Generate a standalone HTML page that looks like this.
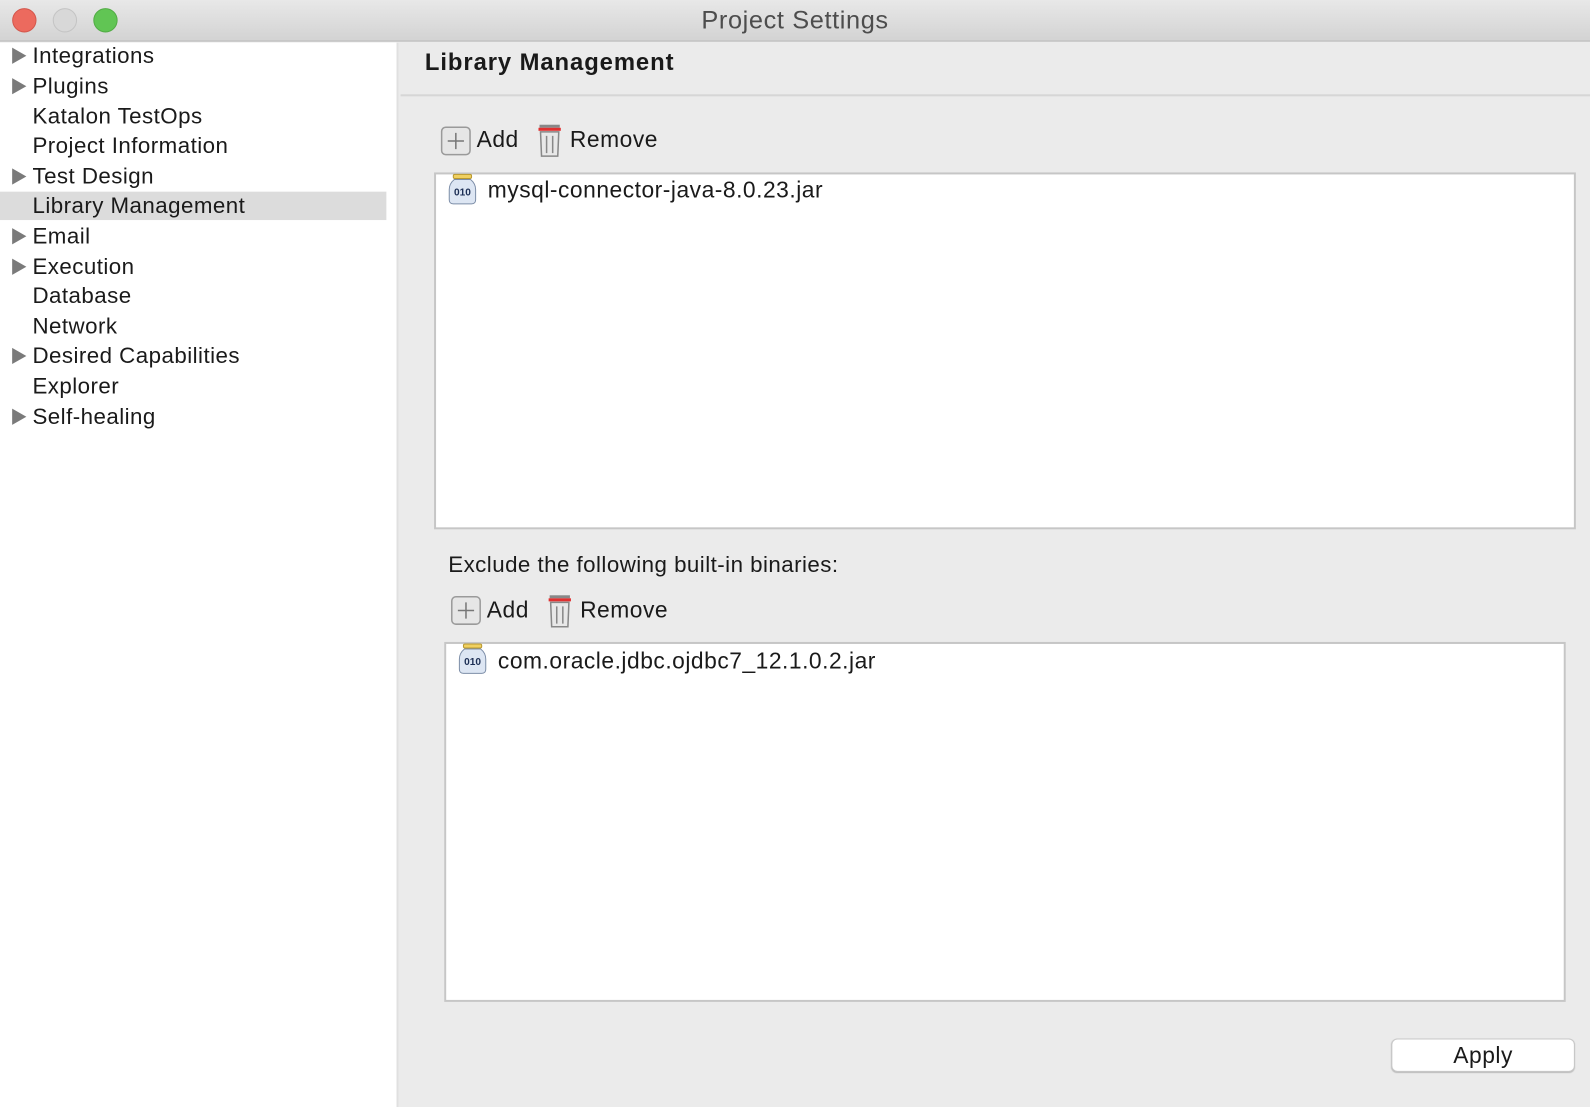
<!DOCTYPE html>
<html><head><meta charset="utf-8"><style>
*{margin:0;padding:0;box-sizing:border-box}
body{width:1590px;height:1092px;overflow:hidden;background:#ebebeb;font-family:"Liberation Sans",sans-serif;color:#1a1a1a;position:relative}
#w{position:absolute;left:0;top:0;width:1568px;height:1077px;transform:scale(1.0141);transform-origin:0 0}
.title{position:absolute;left:0;top:0;width:1568px;height:41px;background:linear-gradient(#e8e8e8,#d3d3d3);border-bottom:1px solid #b5b5b5}
.title .t{position:absolute;left:0;width:100%;top:6px;text-align:center;font-size:25px;letter-spacing:0.6px;color:#4d4d4d}
.dot{position:absolute;top:8px;width:24px;height:24px;border-radius:50%}
.side{position:absolute;left:0;top:42px;width:393px;height:1050px;background:#fff;border-right:2px solid #e0e0e0}
.it{position:absolute;left:32px;font-size:22px;letter-spacing:0.45px;height:30px;line-height:30px;white-space:nowrap}
.tri{position:absolute;left:-20px;top:7px;width:0;height:0;border-left:14px solid #7a7a7a;border-top:8px solid transparent;border-bottom:8px solid transparent}
.sel{position:absolute;left:0;top:147px;width:381px;height:28px;background:#dcdcdc}
.abs{position:absolute;white-space:nowrap}
.tx{font-size:22.5px;letter-spacing:0.5px}
.box{position:absolute;background:#fff;border:2px solid #c6c6c6}
.btn{position:absolute;left:1372px;top:1024px;width:181px;height:33px;background:#fff;border:1px solid #c8c8c8;border-radius:6px;box-shadow:0 1px 1px #bbb;text-align:center;font-size:22.5px;letter-spacing:0.5px;line-height:32px}
</style></head><body><div id="w">
<div class="title"><div class="t">Project Settings</div>
<div class="dot" style="left:12px;background:#ec6a5e;border:1px solid #d4574c"></div>
<div class="dot" style="left:52px;background:#d8d8d8;border:1px solid #c4c4c4"></div>
<div class="dot" style="left:92px;background:#61c554;border:1px solid #52ac45"></div>
</div>
<div class="side">
<div class="sel"></div>
<div class="it" style="top:-2px"><span class="tri"></span>Integrations</div>
<div class="it" style="top:28px"><span class="tri"></span>Plugins</div>
<div class="it" style="top:58px">Katalon TestOps</div>
<div class="it" style="top:87px">Project Information</div>
<div class="it" style="top:117px"><span class="tri"></span>Test Design</div>
<div class="it" style="top:146px">Library Management</div>
<div class="it" style="top:176px"><span class="tri"></span>Email</div>
<div class="it" style="top:206px"><span class="tri"></span>Execution</div>
<div class="it" style="top:235px">Database</div>
<div class="it" style="top:265px">Network</div>
<div class="it" style="top:294px"><span class="tri"></span>Desired Capabilities</div>
<div class="it" style="top:324px">Explorer</div>
<div class="it" style="top:354px"><span class="tri"></span>Self-healing</div>
</div>
<div class="abs" style="left:419px;top:48px;font-size:23.5px;letter-spacing:0.9px;font-weight:bold">Library Management</div>
<div class="abs" style="left:395px;top:93px;width:1195px;height:2px;background:#d6d6d6"></div>

<svg class="abs" style="left:434px;top:124px" width="32" height="30"><rect x="1.5" y="1.5" width="28" height="27" rx="4" fill="#e6e6e6" stroke="#9a9a9a" stroke-width="1.5"/><path d="M15.5 7v16M7.5 15h16" stroke="#777" stroke-width="1.5"/></svg>
<div class="abs tx" style="left:470px;top:125px">Add</div>
<svg class="abs" style="left:529px;top:122px" width="26" height="34"><rect x="3" y="1" width="20" height="3" fill="#888"/><rect x="2" y="4" width="22" height="3" fill="#e03030"/><path d="M4 8h18l-1 24H5z" fill="#e8e8e8" stroke="#888" stroke-width="1.5"/><path d="M10 12v17M16 12v17" stroke="#888" stroke-width="1.5"/></svg>
<div class="abs tx" style="left:562px;top:125px">Remove</div>
<div class="box" style="left:428px;top:170px;width:1126px;height:352px"></div>
<svg class="abs" style="left:441px;top:171px" width="30" height="32"><rect x="6" y="1" width="18" height="4" rx="1.5" fill="#f0d060" stroke="#b89830"/><path d="M7 6h16q5 4 5 10v10q0 4-4 4H6q-4 0-4-4V16q0-6 5-10z" fill="#dde6f3" stroke="#7d8ea8"/><text x="15" y="22" font-size="10" font-weight="bold" text-anchor="middle" fill="#1d2f55" font-family="Liberation Sans">010</text></svg>
<div class="abs tx" style="left:481px;top:175px">mysql-connector-java-8.0.23.jar</div>

<div class="abs" style="left:442px;top:544px;font-size:22px;letter-spacing:0.45px">Exclude the following built-in binaries:</div>
<svg class="abs" style="left:444px;top:587px" width="32" height="30"><rect x="1.5" y="1.5" width="28" height="27" rx="4" fill="#e6e6e6" stroke="#9a9a9a" stroke-width="1.5"/><path d="M15.5 7v16M7.5 15h16" stroke="#777" stroke-width="1.5"/></svg>
<div class="abs tx" style="left:480px;top:589px">Add</div>
<svg class="abs" style="left:539px;top:586px" width="26" height="34"><rect x="3" y="1" width="20" height="3" fill="#888"/><rect x="2" y="4" width="22" height="3" fill="#e03030"/><path d="M4 8h18l-1 24H5z" fill="#e8e8e8" stroke="#888" stroke-width="1.5"/><path d="M10 12v17M16 12v17" stroke="#888" stroke-width="1.5"/></svg>
<div class="abs tx" style="left:572px;top:589px">Remove</div>
<div class="box" style="left:438px;top:633px;width:1106px;height:355px"></div>
<svg class="abs" style="left:451px;top:634px" width="30" height="32"><rect x="6" y="1" width="18" height="4" rx="1.5" fill="#f0d060" stroke="#b89830"/><path d="M7 6h16q5 4 5 10v10q0 4-4 4H6q-4 0-4-4V16q0-6 5-10z" fill="#dde6f3" stroke="#7d8ea8"/><text x="15" y="22" font-size="10" font-weight="bold" text-anchor="middle" fill="#1d2f55" font-family="Liberation Sans">010</text></svg>
<div class="abs tx" style="left:491px;top:639px">com.oracle.jdbc.ojdbc7_12.1.0.2.jar</div>

<div class="btn">Apply</div>
</div></body></html>
